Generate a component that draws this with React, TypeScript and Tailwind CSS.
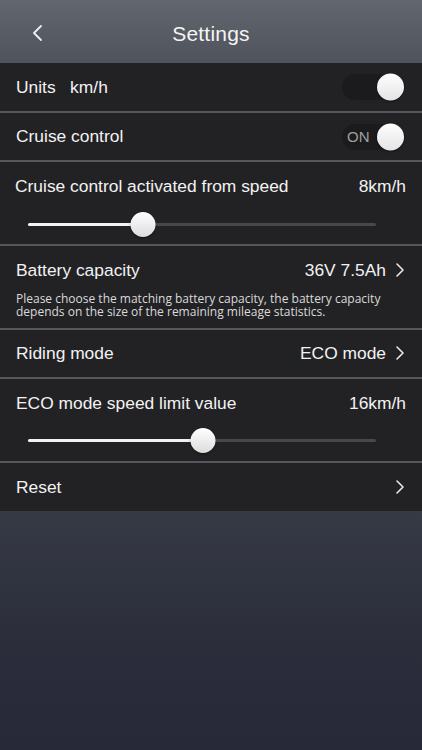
import React from "react";

const Chevron = () => (
  <svg width="12" height="16" viewBox="0 0 12 16" fill="none" className="shrink-0">
    <polyline points="3,2 9,8 3,14" stroke="#e8e8e8" strokeWidth="1.6" strokeLinecap="round" strokeLinejoin="round" />
  </svg>
);

const Toggle = ({ on }: { on?: boolean }) => (
  <div className="relative w-[62px] h-[26px] rounded-full bg-[#1b1b1d] flex items-center">
    {on && <span className="ml-[5px] text-[15px] text-[#a0a0a0] leading-none">ON</span>}
    <div className="absolute right-0 top-1/2 -translate-y-1/2 w-[27px] h-[27px] rounded-full bg-gradient-to-b from-white to-[#e4e4e6] shadow-[0_1px_2px_rgba(0,0,0,0.5)]" />
  </div>
);

const Slider = ({ pct }: { pct: number }) => (
  <div className="relative ml-[28px] mr-[46px] h-[24px] flex items-center">
    <div className="w-full h-[3px] rounded-full bg-[#48484c]" />
    <div className="absolute left-0 h-[3px] rounded-full bg-[#f2f2f2]" style={{ width: `${pct}%` }} />
    <div
      className="absolute w-[25px] h-[25px] rounded-full bg-gradient-to-b from-white to-[#dcdcde] shadow-[0_1px_2px_rgba(0,0,0,0.5)] -translate-x-1/2"
      style={{ left: `${pct}%` }}
    />
  </div>
);

const Sep = () => <div className="h-[2px] bg-[#55575f]" />;

export default function App() {
  return (
    <div
      className="w-[422px] h-[750px] flex flex-col bg-[#262838] text-[#f2f2f2] overflow-hidden"
      style={{ fontFamily: '"Liberation Sans", Arial, sans-serif' }}
    >
      <div className="h-[63px] shrink-0 relative flex items-center justify-center bg-gradient-to-b from-[#62666e] to-[#4f535b]">
        <svg width="14" height="18" viewBox="0 0 14 18" className="absolute left-[30px] top-[24px]" fill="none">
          <polyline points="11,2 4,9 11,16" stroke="#f0f0f0" strokeWidth="1.8" strokeLinecap="round" strokeLinejoin="round" />
        </svg>
        <span className="pt-[4px] text-[21px] text-[#f4f4f4] tracking-[0.2px]">Settings</span>
      </div>

      <div className="bg-[#222225] text-[17.4px]">
        <div className="h-[48px] flex items-center justify-between pl-[16px] pr-[18px]">
          <span>Units&nbsp;&nbsp;&nbsp;km/h</span>
          <Toggle />
        </div>
        <Sep />
        <div className="h-[47px] flex items-center justify-between pl-[16px] pr-[18px]">
          <span>Cruise control</span>
          <Toggle on />
        </div>
        <Sep />
        <div className="h-[82px] flex flex-col">
          <div className="flex items-center justify-between pl-[15px] pr-[16px] pt-[14px] h-[34px]">
            <span>Cruise control activated from speed</span>
            <span>8km/h</span>
          </div>
          <div className="mt-[16px]">
            <Slider pct={33} />
          </div>
        </div>
        <Sep />
        <div className="h-[82px] flex flex-col pl-[16px] pr-[16px]">
          <div className="flex items-center justify-between pt-[14px] h-[34px]">
            <span>Battery capacity</span>
            <div className="flex items-center gap-[8px]">
              <span>36V 7.5Ah</span>
              <Chevron />
            </div>
          </div>
          <p
            className="mt-[13px] text-[12px] leading-[12.5px] text-[#dadada]"
            style={{ fontFamily: '"Open Sans", "Noto Sans", sans-serif' }}
          >
            Please choose the matching battery capacity, the battery capacity depends on the size of the remaining mileage statistics.
          </p>
        </div>
        <Sep />
        <div className="h-[47px] flex items-center justify-between pl-[16px] pr-[16px]">
          <span>Riding mode</span>
          <div className="flex items-center gap-[8px]">
            <span>ECO mode</span>
            <Chevron />
          </div>
        </div>
        <Sep />
        <div className="h-[82px] flex flex-col">
          <div className="flex items-center justify-between pl-[16px] pr-[16px] pt-[14px] h-[34px]">
            <span>ECO mode speed limit value</span>
            <span>16km/h</span>
          </div>
          <div className="mt-[15px]">
            <Slider pct={50.3} />
          </div>
        </div>
        <Sep />
        <div className="h-[48px] flex items-center justify-between pl-[16px] pr-[16px]">
          <span>Reset</span>
          <Chevron />
        </div>
      </div>

      <div className="flex-1 bg-gradient-to-b from-[#363a45] via-[#2c2e3c] to-[#272838]" />
    </div>
  );
}
